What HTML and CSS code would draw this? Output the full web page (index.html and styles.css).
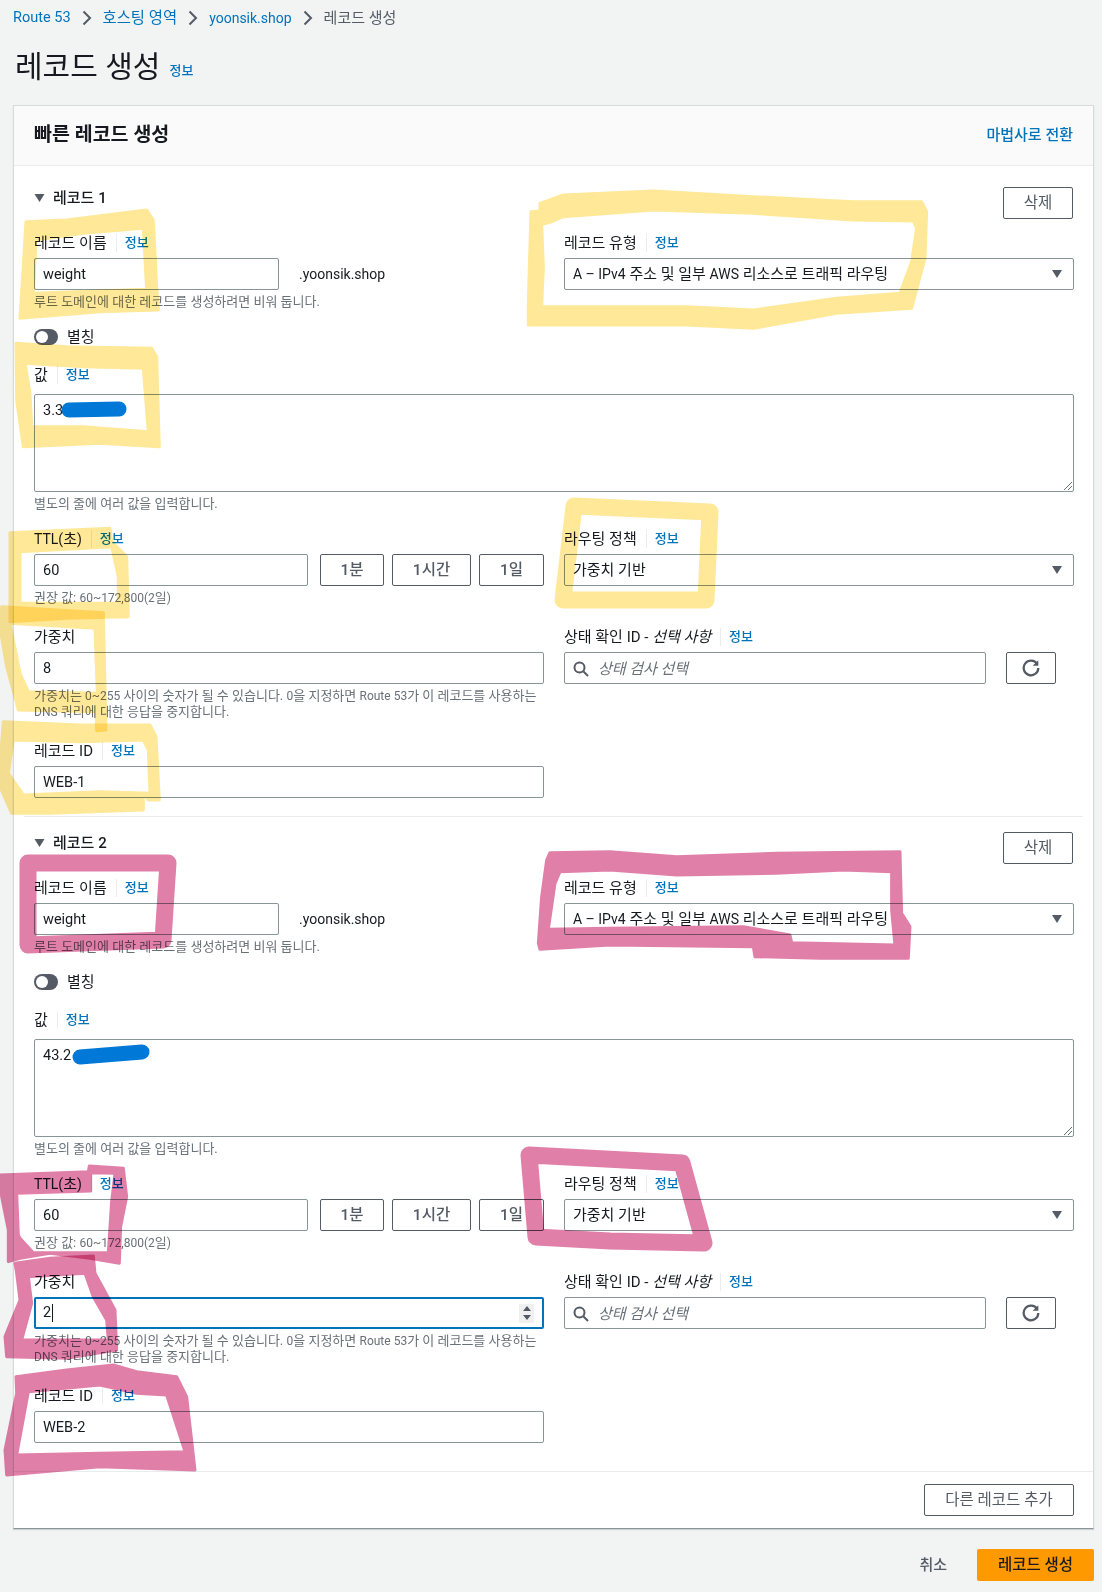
FILE: index.html
```html
<!DOCTYPE html>
<html lang="ko">
<head>
<meta charset="utf-8">
<title>레코드 생성</title>
<link rel="stylesheet" href="styles.css">
</head>
<body>
<main class="page">
  <nav class="crumbs">
    <a class="crumb-link crumb-route">Route 53</a>
    <svg class="crumb-sep" viewBox="0 0 10 16"><path d="M1.500 1.500 8 8l-6.500 6.500"/></svg>
    <a class="crumb-link">호스팅 영역</a>
    <svg class="crumb-sep" viewBox="0 0 10 16"><path d="M1.500 1.500 8 8l-6.500 6.500"/></svg>
    <a class="crumb-link crumb-latin">yoonsik.shop</a>
    <svg class="crumb-sep" viewBox="0 0 10 16"><path d="M1.500 1.500 8 8l-6.500 6.500"/></svg>
    <span class="crumb-current">레코드 생성</span>
  </nav>
  <div class="title-row"><h1 class="title">레코드 생성</h1><a class="info title-info">정보</a></div>

  <section class="panel">
    <header class="panel-head">
      <h2 class="panel-title">빠른 레코드 생성</h2>
      <a class="wizard">마법사로 전환</a>
    </header>

    <div class="record">
      <div class="record-head">
        <div class="record-name"><svg class="expand" viewBox="0 0 10 8"><path d="M0 0h10L5 8z"/></svg>레코드 1</div>
        <button class="btn">삭제</button>
      </div>
      <div class="two-col row-first">
        <div>
          <div class="label"><span>레코드 이름</span><i class="bar"></i><a class="info">정보</a></div>
          <div class="name-row"><div class="field name-field">weight</div><span class="domain">.yoonsik.shop</span></div>
          <p class="help">루트 도메인에 대한 레코드를 생성하려면 비워 둡니다.</p>
        </div>
        <div>
          <div class="label"><span>레코드 유형</span><i class="bar"></i><a class="info">정보</a></div>
          <div class="field select"><span><span class="lat">A – IPv4</span> 주소 및 일부 <span class="lat">AWS</span> 리소스로 트래픽 라우팅</span><svg class="caret" viewBox="0 0 10 8"><path d="M0 0h10L5 8z"/></svg></div>
        </div>
      </div>
      <div class="toggle-row"><span class="toggle"><i class="knob"></i></span><span>별칭</span></div>
      <div class="label value-label"><span>값</span><i class="bar"></i><a class="info">정보</a></div>
      <div class="field textarea">3.3<svg class="grip" viewBox="0 0 10 10"><path d="M1 9 9 1M5 9l4-4"/></svg></div>
      <p class="help">별도의 줄에 여러 값을 입력합니다.</p>
      <div class="two-col row-next">
        <div>
          <div class="label"><span><span class="lat">TTL(</span>초<span class="lat">)</span></span><i class="bar"></i><a class="info">정보</a></div>
          <div class="ttl-row"><div class="field ttl-field">60</div><button class="btn btn-strong w-min">1분</button><button class="btn btn-strong w-hour">1시간</button><button class="btn btn-strong w-day">1일</button></div>
          <p class="help">권장 값: <span class="help-lat">60~172,800(2</span>일<span class="help-lat">)</span></p>
        </div>
        <div>
          <div class="label"><span>라우팅 정책</span><i class="bar"></i><a class="info">정보</a></div>
          <div class="field select"><span>가중치 기반</span><svg class="caret" viewBox="0 0 10 8"><path d="M0 0h10L5 8z"/></svg></div>
        </div>
      </div>
      <div class="two-col row-weight">
        <div>
          <div class="label"><span>가중치</span></div>
          <div class="field">8</div>
          <p class="help">가중치는 <span class="help-lat">0~255</span> 사이의 숫자가 될 수 있습니다. <span class="help-lat">0</span>을 지정하면 <span class="help-lat">Route 53</span>가 이 레코드를 사용하는 <span class="help-lat">DNS</span> 쿼리에 대한 응답을 중지합니다.</p>
        </div>
        <div>
          <div class="label"><span>상태 확인 ID - <em>선택 사항</em></span><i class="bar"></i><a class="info">정보</a></div>
          <div class="health-row">
            <div class="field search"><svg class="search-icon" viewBox="0 0 16 16"><circle cx="6.500" cy="6.500" r="5"/><path d="m10.500 10.500 4.500 4.500"/></svg><em class="placeholder">상태 검사 선택</em></div>
            <button class="btn refresh"><svg class="refresh-icon" viewBox="0 0 16 16"><path class="arc" d="M13.500 4.500A6.500 6.500 0 1 0 14.500 8"/><path class="tip" d="M14.500 1v5h-5z"/></svg></button>
          </div>
        </div>
      </div>
      <div class="two-col row-id">
        <div>
          <div class="label"><span>레코드 ID</span><i class="bar"></i><a class="info">정보</a></div>
          <div class="field">WEB-1</div>
        </div>
      </div>
    </div>

    <div class="divider"></div>

    <div class="record record-second">
      <div class="record-head">
        <div class="record-name"><svg class="expand" viewBox="0 0 10 8"><path d="M0 0h10L5 8z"/></svg>레코드 2</div>
        <button class="btn">삭제</button>
      </div>
      <div class="two-col row-first">
        <div>
          <div class="label"><span>레코드 이름</span><i class="bar"></i><a class="info">정보</a></div>
          <div class="name-row"><div class="field name-field">weight</div><span class="domain">.yoonsik.shop</span></div>
          <p class="help">루트 도메인에 대한 레코드를 생성하려면 비워 둡니다.</p>
        </div>
        <div>
          <div class="label"><span>레코드 유형</span><i class="bar"></i><a class="info">정보</a></div>
          <div class="field select"><span><span class="lat">A – IPv4</span> 주소 및 일부 <span class="lat">AWS</span> 리소스로 트래픽 라우팅</span><svg class="caret" viewBox="0 0 10 8"><path d="M0 0h10L5 8z"/></svg></div>
        </div>
      </div>
      <div class="toggle-row"><span class="toggle"><i class="knob"></i></span><span>별칭</span></div>
      <div class="label value-label"><span>값</span><i class="bar"></i><a class="info">정보</a></div>
      <div class="field textarea">43.2<svg class="grip" viewBox="0 0 10 10"><path d="M1 9 9 1M5 9l4-4"/></svg></div>
      <p class="help">별도의 줄에 여러 값을 입력합니다.</p>
      <div class="two-col row-next">
        <div>
          <div class="label"><span><span class="lat">TTL(</span>초<span class="lat">)</span></span><i class="bar"></i><a class="info">정보</a></div>
          <div class="ttl-row"><div class="field ttl-field">60</div><button class="btn btn-strong w-min">1분</button><button class="btn btn-strong w-hour">1시간</button><button class="btn btn-strong w-day">1일</button></div>
          <p class="help">권장 값: <span class="help-lat">60~172,800(2</span>일<span class="help-lat">)</span></p>
        </div>
        <div>
          <div class="label"><span>라우팅 정책</span><i class="bar"></i><a class="info">정보</a></div>
          <div class="field select"><span>가중치 기반</span><svg class="caret" viewBox="0 0 10 8"><path d="M0 0h10L5 8z"/></svg></div>
        </div>
      </div>
      <div class="two-col row-weight">
        <div>
          <div class="label"><span>가중치</span></div>
          <div class="field focused"><span class="typed">2</span><span class="spinner"><svg viewBox="0 0 10 18"><path d="M1 7h8L5 2zM1 11h8l-4 5z"/></svg></span></div>
          <p class="help">가중치는 <span class="help-lat">0~255</span> 사이의 숫자가 될 수 있습니다. <span class="help-lat">0</span>을 지정하면 <span class="help-lat">Route 53</span>가 이 레코드를 사용하는 <span class="help-lat">DNS</span> 쿼리에 대한 응답을 중지합니다.</p>
        </div>
        <div>
          <div class="label"><span>상태 확인 ID - <em>선택 사항</em></span><i class="bar"></i><a class="info">정보</a></div>
          <div class="health-row">
            <div class="field search"><svg class="search-icon" viewBox="0 0 16 16"><circle cx="6.500" cy="6.500" r="5"/><path d="m10.500 10.500 4.500 4.500"/></svg><em class="placeholder">상태 검사 선택</em></div>
            <button class="btn refresh"><svg class="refresh-icon" viewBox="0 0 16 16"><path class="arc" d="M13.500 4.500A6.500 6.500 0 1 0 14.500 8"/><path class="tip" d="M14.500 1v5h-5z"/></svg></button>
          </div>
        </div>
      </div>
      <div class="two-col row-id">
        <div>
          <div class="label"><span>레코드 ID</span><i class="bar"></i><a class="info">정보</a></div>
          <div class="field">WEB-2</div>
        </div>
      </div>
    </div>

    <footer class="panel-foot"><button class="btn add">다른 레코드 추가</button></footer>
  </section>

  <div class="actions"><a class="cancel">취소</a><button class="primary">레코드 생성</button></div>
</main>

<svg class="marks" viewBox="0 0 1102 1592" aria-hidden="true">
  <g class="mark-yellow">
    <g transform="translate(0 200) scale(.3333)">
      <path d="M78 65 200 60 440 30 460 60 470 260 475 330 300 335 60 355 70 200 75 110ZM108 120 250 100 430 85 440 268 100 280Z"/>
      <path d="M48 430 200 440 455 445 470 470 478 740 300 730 70 740 50 600ZM75 490 250 500 430 505 445 695 250 680 95 680 90 580Z"/>
    </g>
    <g transform="translate(520 185) scale(.3333)">
      <path d="M60 55 130 30 400 18 700 35 1000 50 1205 50 1220 80 1215 220 1175 370 950 385 700 430 500 420 25 420 25 350 33 80 60 78ZM65 118 90 112 130 95 400 75 700 85 1000 105 1180 108 1190 130 1175 230 1140 325 950 340 700 375 500 365 65 365 70 250Z"/>
    </g>
    <g transform="translate(0 510) scale(.3333)">
      <path d="M30 68 330 55 335 95 380 140 385 320 200 325 30 335ZM60 125 335 110 355 200 355 280 200 280 60 280Z"/>
      <path d="M5 290 310 308 318 660 290 662 288 605 55 600 20 470 3 370ZM30 340 285 355 292 550 85 545 60 490Z"/>
      <path d="M10 635 240 645 450 645 468 680 478 870 445 870 430 850 430 900 150 910 35 910 0 830 5 700ZM40 690 240 695 430 690 445 720 450 850 300 845 70 855 25 790Z"/>
    </g>
    <path class="mark-line" d="M574 506 710 512 706 600 563 600Z"/>
  </g>
  <g class="mark-pink">
    <path class="mark-line" d="M28 863 92 863 168 863 163 940 28 945Z"/>
    <path class="mark-line" d="M529 1155 682 1163 704 1243 610 1241 536 1237Z"/>
    <g transform="translate(510 830) scale(.3333)">
      <path d="M120 68 300 65 500 80 800 70 1170 65 1175 250 1200 290 1195 385 930 385 735 380 730 350 300 345 90 358 85 340 95 200 110 90ZM150 125 300 120 500 135 800 130 1000 120 1145 125 1145 240 1155 345 845 338 840 315 700 290 300 295 115 298 135 160Z"/>
    </g>
    <g transform="translate(0 1130) scale(.3333)">
      <path d="M0 135 265 125 268 108 370 115 380 200 362 290 358 400 270 385 150 370 60 385 25 395 25 300 5 200ZM50 190 272 183 272 128 345 130 335 215 325 368 100 368 60 325 55 315Z"/>
      <path d="M45 400 150 385 280 378 285 430 345 540 350 660 200 685 20 680 15 620 60 510 50 430ZM85 440 255 430 280 500 320 570 325 630 65 630 95 520Z"/>
      <path d="M48 740 200 720 340 705 410 725 530 740 560 800 585 1020 300 1010 20 1035 15 960 50 790ZM85 785 300 765 410 790 500 795 555 965 300 970 50 975Z"/>
    </g>
  </g>
  <g class="mark-blue">
    <path d="M69 410 119 409"/>
    <path d="M80 1057 142 1052"/>
  </g>
</svg>
</body>
</html>
```

FILE: styles.css
```css
* { box-sizing: border-box; }
html, body { margin: 0; padding: 0; }
body {
  position: relative;
  height: 1592px;
  overflow: hidden;
  background: #f2f3f3;
  color: #16191f;
  font: 15px/22px Roboto, "Noto Sans CJK KR", sans-serif;
}
.page { padding: 7px 8px 0 13px; }
a { color: #0073bb; }
button { font: inherit; }
.lat { font-size: 14px; }
.help-lat { font-size: 12px; }

.crumbs { display: flex; align-items: center; height: 22px; }
.crumb-link { color: #0073bb; font-size: 15.400px; }
.crumb-route { font-size: 14.500px; }
.crumb-latin { font-size: 14px; }
.crumb-current { color: #545b64; }
.crumb-sep { width: 10px; height: 16px; margin: 0 11px; fill: none; stroke: #545b64; stroke-width: 2; }

.title-row { display: flex; align-items: flex-end; margin-top: 20px; height: 36px; }
.title { margin: 0 0 0 2px; font-size: 30px; font-weight: 400; line-height: 36px; }
.info { font-size: 13px; font-weight: 500; color: #0073bb; line-height: 18px; }
.title-info { margin: 0 0 5px 9px; }

.panel {
  margin-top: 20px;
  width: 1081px;
  background: #fff;
  border: 1px solid #d5dbdb;
  border-bottom-color: #879596;
  box-shadow: 0 1px 1px rgba(0, 28, 36, .15);
}
.panel-head {
  display: flex;
  justify-content: space-between;
  align-items: center;
  height: 60px;
  padding: 0 20px 1px;
  background: #fafafa;
  border-bottom: 1px solid #eaeded;
}
.panel-title { margin: 0; font-size: 19.500px; font-weight: 700; }
.wizard { font-weight: 500; color: #0073bb; }

.record { padding: 21px 20px 18px; }
.record-second { padding: 15px 20px 28px; }
.divider { height: 1px; margin: 0 10px; background: #eaeded; }
.record-head { display: flex; justify-content: space-between; align-items: center; height: 32px; }
.record-name { display: flex; align-items: center; font-weight: 500; margin-top: -11px; }
.expand { width: 11px; height: 8px; margin-right: 8px; fill: #545b64; }

.btn {
  height: 32px;
  width: 70px;
  padding: 0;
  background: #fff;
  border: 1px solid #545b64;
  border-radius: 2px;
  color: #545b64;
  font-size: 15.500px;
}
.btn-strong { font-weight: 500; }
.w-min { width: 64px; margin-left: 12px; }
.w-hour { width: 79px; margin-left: 8px; }
.w-day { width: 65px; margin-left: 8px; }

.two-col { display: grid; grid-template-columns: 510px 510px; column-gap: 20px; }
.row-first { margin-top: 13px; }
.row-next { margin-top: 16px; }
.row-weight { margin-top: 20px; }
.row-id { margin-top: 20px; }

.label { display: flex; align-items: center; height: 22px; margin-bottom: 4px; }
.label em { font-style: italic; }
.bar { width: 1px; height: 18px; margin: 0 8px 0 9px; background: #eaeded; }
.value-label { margin-top: 17px; margin-bottom: 8px; }

.field {
  position: relative;
  display: flex;
  align-items: center;
  height: 32px;
  padding: 1px 8px 0;
  background: #fff;
  border: 1px solid #879596;
  border-radius: 2px;
  font-size: 14.500px;
}
.name-row { display: flex; align-items: center; }
.name-field { width: 245px; }
.domain { margin-left: 20px; font-size: 14px; }
.select { justify-content: space-between; padding-top: 0; font-size: 15px; }
.caret { width: 10px; height: 8px; margin-right: 3px; fill: #545b64; }
.textarea { align-items: flex-start; width: 1040px; height: 98px; padding-top: 5px; }
.grip { position: absolute; right: 0; bottom: 0; width: 10px; height: 10px; fill: none; stroke: #687078; stroke-width: 1; }

.help { margin: 4px 0 0; font-size: 13px; line-height: 16px; color: #687078; }
.toggle-row { display: flex; align-items: center; height: 20px; margin-top: 17px; }
.toggle { display: flex; align-items: center; width: 24px; height: 16px; margin-right: 9px; padding-left: 2px; border-radius: 8px; background: #545b64; }
.knob { width: 12px; height: 12px; border-radius: 50%; background: #fff; }

.ttl-row { display: flex; align-items: center; }
.ttl-field { width: 274px; }

.health-row { display: flex; align-items: center; }
.search { flex: none; width: 422px; }
.search-icon { width: 16px; height: 16px; margin-right: 9px; fill: none; stroke: #545b64; stroke-width: 2; }
.placeholder { color: #687078; font-style: italic; font-size: 15px; }
.refresh { display: flex; align-items: center; justify-content: center; width: 50px; margin-left: 20px; }
.refresh-icon { width: 18px; height: 18px; }
.refresh-icon .arc { fill: none; stroke: #545b64; stroke-width: 2; }
.refresh-icon .tip { fill: #545b64; }

.focused { border: 2px solid #0073bb; padding: 0 7px; justify-content: space-between; }
.typed { border-right: 1px solid #16191f; line-height: 18px; padding-right: 1px; }
.spinner { display: flex; align-items: center; justify-content: center; width: 15px; height: 19px; margin-right: 1px; background: #f0f0f0; }
.spinner svg { width: 10px; height: 18px; fill: #545b64; }

.panel-foot { display: flex; justify-content: flex-end; padding: 12px 19px 12px 20px; border-top: 1px solid #eaeded; }
.add { width: 150px; }

.actions { display: flex; justify-content: flex-end; align-items: center; margin-top: 20px; }
.cancel { margin-right: 30px; color: #545b64; font-weight: 500; }
.primary { width: 117px; height: 32px; padding: 0; background: #ff9900; border: 0; border-radius: 2px; color: #16191f; font-size: 15.500px; font-weight: 500; }

.marks { position: absolute; top: 0; left: 0; width: 1102px; height: 1592px; pointer-events: none; }
.marks path { fill-rule: evenodd; stroke-linejoin: round; mix-blend-mode: multiply; }
.mark-yellow { fill: #ffe897; stroke: #ffe897; stroke-width: 9; }
.mark-pink { fill: #e07fa8; stroke: #e07fa8; stroke-width: 9; }
.mark-yellow .mark-line { fill: none; stroke-width: 17; }
.mark-pink .mark-line { fill: none; stroke-width: 17; }
.mark-blue path { fill: none; stroke: #0078d7; stroke-width: 15; stroke-linecap: round; mix-blend-mode: normal; }
```
